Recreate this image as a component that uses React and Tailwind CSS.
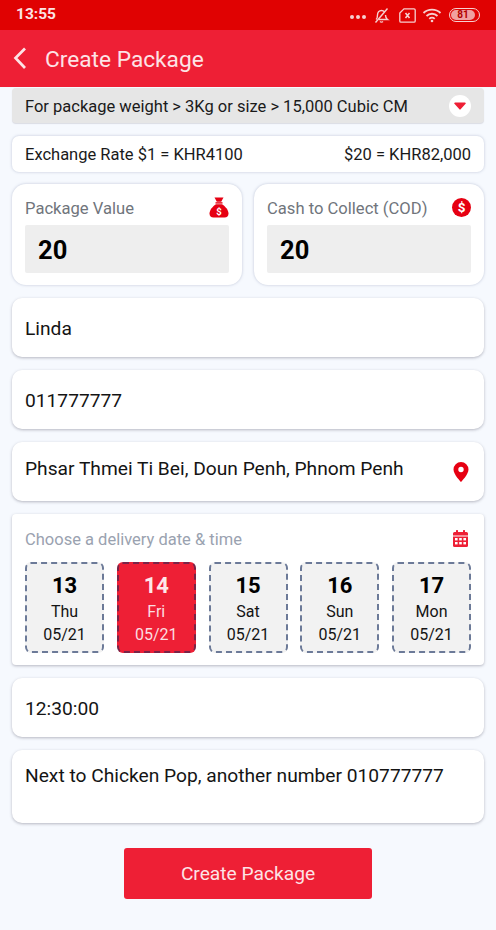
const roboto = { fontFamily: 'Roboto, sans-serif' };

function Bag() {
  return (
    <svg className="mt-[-4px]" width="20" height="21" viewBox="0 0 20 21">
      <path d="M5.500 .5h9l-2.300 4.300H7.800z" fill="#e60012" />
      <rect x="6.500" y="5.200" width="7" height="1.400" fill="#e60012" />
      <path d="M7 7.200h6c3.200 2 6.500 5.800 6.500 9.300 0 2.800-1.500 4-4 4h-11c-2.500 0-4-1.200-4-4C.5 13 3.800 9.200 7 7.200z" fill="#e60012" />
      <text x="10" y="17.700" textAnchor="middle" fontSize="9.500" fontWeight="700" fill="#fff" fontFamily="Roboto">$</text>
    </svg>
  );
}

function Coin() {
  return (
    <svg className="mt-[-4px]" width="19" height="19" viewBox="0 0 19 19">
      <circle cx="9.500" cy="9.500" r="9.500" fill="#e60012" />
      <text x="9.500" y="14.300" textAnchor="middle" fontSize="13.500" fontWeight="700" fill="#fff" fontFamily="Roboto">$</text>
    </svg>
  );
}

function Pin() {
  return (
    <svg width="16" height="20" viewBox="0 0 16 20">
      <path fillRule="evenodd" d="M8 0a7.500 7.500 0 0 1 7.500 7.500C15.500 12.500 8 20 8 20S.5 12.500.5 7.500A7.500 7.500 0 0 1 8 0zm0 4.800a2.700 2.700 0 1 0 0 5.400 2.700 2.700 0 0 0 0-5.400z" fill="#e60012" />
    </svg>
  );
}

function Calendar() {
  return (
    <svg className="mr-[3px]" width="15" height="17" viewBox="0 0 15 17">
      <rect x="3" y="0" width="2" height="3" rx=".5" fill="#ee1f35" />
      <rect x="10" y="0" width="2" height="3" rx=".5" fill="#ee1f35" />
      <path d="M1.500 2h12A1.500 1.500 0 0 1 15 3.500V5.500H0V3.500A1.500 1.500 0 0 1 1.500 2z" fill="#ee1f35" />
      <path d="M0 6.500h15v9A1.500 1.500 0 0 1 13.500 17h-12A1.500 1.500 0 0 1 0 15.500z" fill="#ee1f35" />
      {[2, 6.200, 10.400].map((x) =>
        [8, 12].map((y) => <rect key={`${x}-${y}`} x={x} y={y} width="2.600" height="2.400" fill="#fff" />)
      )}
    </svg>
  );
}

function StatusIcons() {
  return (
    <div className="flex items-center mr-[1px]">
      <div className="flex gap-[2px] mt-[4px]">
        <span className="w-[4px] h-[4px] rounded-full bg-[#f6d0d0]" />
        <span className="w-[4px] h-[4px] rounded-full bg-[#f6d0d0]" />
        <span className="w-[4px] h-[4px] rounded-full bg-[#f6d0d0]" />
      </div>
      <svg className="ml-[7px]" width="17" height="17" viewBox="0 0 17 17" fill="none" stroke="#f6d0d0" strokeWidth="1.400">
        <path d="M3 12.500c1.500-1 1.500-2.500 1.500-4.500C4.500 5.500 6 3.500 8.500 3.500c1.500 0 2.500.7 3.200 1.500M12.500 8c0 2 .5 3.500 2 4.500H6" />
        <path d="M7 14.500c.8.800 2.200.800 3 0" />
        <path d="M14.500 1.500 2.500 15.500" />
      </svg>
      <svg className="ml-[9px]" width="17" height="15" viewBox="0 0 17 15" fill="none" stroke="#f6d0d0" strokeWidth="1.300">
        <path d="M5 .8h10a1.200 1.200 0 0 1 1.200 1.200v11a1.200 1.200 0 0 1-1.200 1.200H2A1.200 1.200 0 0 1 .8 13V5z" />
        <path d="m6.500 5 4 5M10.500 5l-4 5" strokeWidth="1.600" />
      </svg>
      <svg className="ml-[6px]" width="20" height="15" viewBox="0 0 19 15" fill="none" stroke="#f6d0d0" strokeWidth="1.800">
        <path d="M1 5c4.500-4.500 12.500-4.500 17 0" />
        <path d="M4 8c3-3 8-3 11 0" />
        <path d="M6.800 10.800c1.500-1.400 3.900-1.400 5.400 0" />
        <circle cx="9.500" cy="13" r="1.300" fill="#f6d0d0" stroke="none" />
      </svg>
      <div className="ml-[7px] w-[31px] h-[14px] rounded-full border border-[#f6d0d0] p-[1px] flex">
        <div className="w-[24px] h-full rounded-full bg-[#f0a0a0] flex items-center justify-center text-[10px] leading-none font-bold text-[#b00000]">
          81
        </div>
      </div>
    </div>
  );
}

function Field({ children, h = 'h-[59px]', top = false, right, textOffset = 'pt-[3px]' }) {
  return (
    <div className={`${h} mx-3 bg-white rounded-[10px] shadow-[0_1px_3px_rgba(60,60,80,0.35)] pl-[13px] pr-[15px] flex justify-between text-[19.200px] text-[#141414] ${top ? 'pt-[11px]' : 'items-center'}`}>
      <span className={textOffset}>{children}</span>
      {right}
    </div>
  );
}

function ValueCard({ label, icon, value }) {
  return (
    <div className="flex-1 h-[101px] bg-white rounded-[14px] shadow-[0_0_3px_rgba(90,100,140,0.35)] px-[13px] pt-[10px]">
      <div className="h-[30px] flex justify-between items-center">
        <span className="text-[16.600px] text-[#70757c]">{label}</span>
        {icon}
      </div>
      <div className="h-[48px] mt-[1px] bg-[#eeeeee] rounded-[2px] pl-[13px] pt-[3px] flex items-center text-[25.500px] font-bold text-black">
        {value}
      </div>
    </div>
  );
}

function DateCard({ day, name, selected }) {
  return (
    <div className={`w-[79px] h-[91px] rounded-[6px] border-2 border-dashed flex flex-col items-center pt-[9px] ${selected ? 'bg-[#ee1f35] border-[#7a2448] text-[#fbdde0]' : 'bg-[#f2f2f2] border-[#6c7a98] text-[#141414]'}`}>
      <span className={`text-[22px] leading-[26px] font-bold ${selected ? 'text-[#fde8ea]' : 'text-black'}`}>{day}</span>
      <span className="text-[16px] leading-[24px] mt-[1px]">{name}</span>
      <span className="text-[16px] leading-[20px] mt-[1px]">05/21</span>
    </div>
  );
}

export default function App() {
  return (
    <div style={roboto} className="w-[496px] h-[930px] bg-[#f6f9fe] overflow-hidden flex flex-col">
      <div className="h-[30px] bg-[#e00202] flex items-center justify-between pl-[16px] pr-[15px]">
        <span className="text-[15.500px] font-bold text-[#fbe4e4]">13:55</span>
        <StatusIcons />
      </div>
      <div className="h-[57px] bg-[#ee1f35] flex items-center pl-[13px]">
        <svg width="14" height="23" viewBox="0 0 14 23" fill="none" stroke="#fde3e6" strokeWidth="2.700">
          <path d="M12 1.500 2.500 11 12 21" />
        </svg>
        <span className="ml-[18px] pt-[3px] text-[22.700px] text-[#fde3e6]">Create Package</span>
      </div>
      <div className="mx-3 mt-px h-[35px] bg-[#e6e6e6] rounded-[4px] shadow-[0_1px_1px_rgba(60,60,80,0.15)] pl-[13px] pr-[13px] flex items-center justify-between">
        <span className="pt-[3px] text-[16.500px] text-[#1a1a1a]">For package weight &gt; 3Kg or size &gt; 15,000 Cubic CM</span>
        <div className="w-[22px] h-[22px] rounded-full bg-white flex items-center justify-center">
          <svg width="12" height="8" viewBox="0 0 12 8">
            <path d="M1 .5h10a.8.800 0 0 1 .6 1.300L6.600 7.300a.8.800 0 0 1-1.200 0L.4 1.800A.8.800 0 0 1 1 .5z" fill="#ee1f35" />
          </svg>
        </div>
      </div>
      <div className="mx-3 mt-[13px] h-[36px] bg-white rounded-[7px] shadow-[0_0_3px_rgba(90,100,140,0.35)] pl-[13px] pr-[13px] flex items-center justify-between text-[16.500px] text-[#1a1a1a]">
        <span className="pt-[2px]">Exchange Rate $1 = KHR4100</span>
        <span className="pt-[2px]">$20 = KHR82,000</span>
      </div>
      <div className="mx-3 mt-[12px] flex gap-[12px]">
        <ValueCard label="Package Value" icon={<Bag />} value="20" />
        <ValueCard label="Cash to Collect (COD)" icon={<Coin />} value="20" />
      </div>
      <div className="mt-[13px] flex flex-col gap-[13px]">
        <Field>Linda</Field>
        <Field>011777777</Field>
        <Field right={<Pin />} textOffset="pb-[5px]">Phsar Thmei Ti Bei, Doun Penh, Phnom Penh</Field>
        <div className="mx-3 h-[151px] bg-white rounded-[4px] shadow-[0_1px_3px_rgba(60,60,80,0.35)] px-[13px]">
          <div className="h-[48px] flex items-center justify-between">
            <span className="pt-[4px] text-[16.500px] text-[#9aa2b0]">Choose a delivery date &amp; time</span>
            <Calendar />
          </div>
          <div className="flex justify-between">
            <DateCard day="13" name="Thu" />
            <DateCard day="14" name="Fri" selected />
            <DateCard day="15" name="Sat" />
            <DateCard day="16" name="Sun" />
            <DateCard day="17" name="Mon" />
          </div>
        </div>
        <Field>12:30:00</Field>
        <Field h="h-[73px]" top textOffset="pt-[1px]">Next to Chicken Pop, another number 010777777</Field>
      </div>
      <button className="self-center mt-[25px] w-[248px] h-[51px] pt-[2px] bg-[#ee1f35] rounded-[3px] text-[19.200px] text-[#fde3e6]">
        Create Package
      </button>
    </div>
  );
}
